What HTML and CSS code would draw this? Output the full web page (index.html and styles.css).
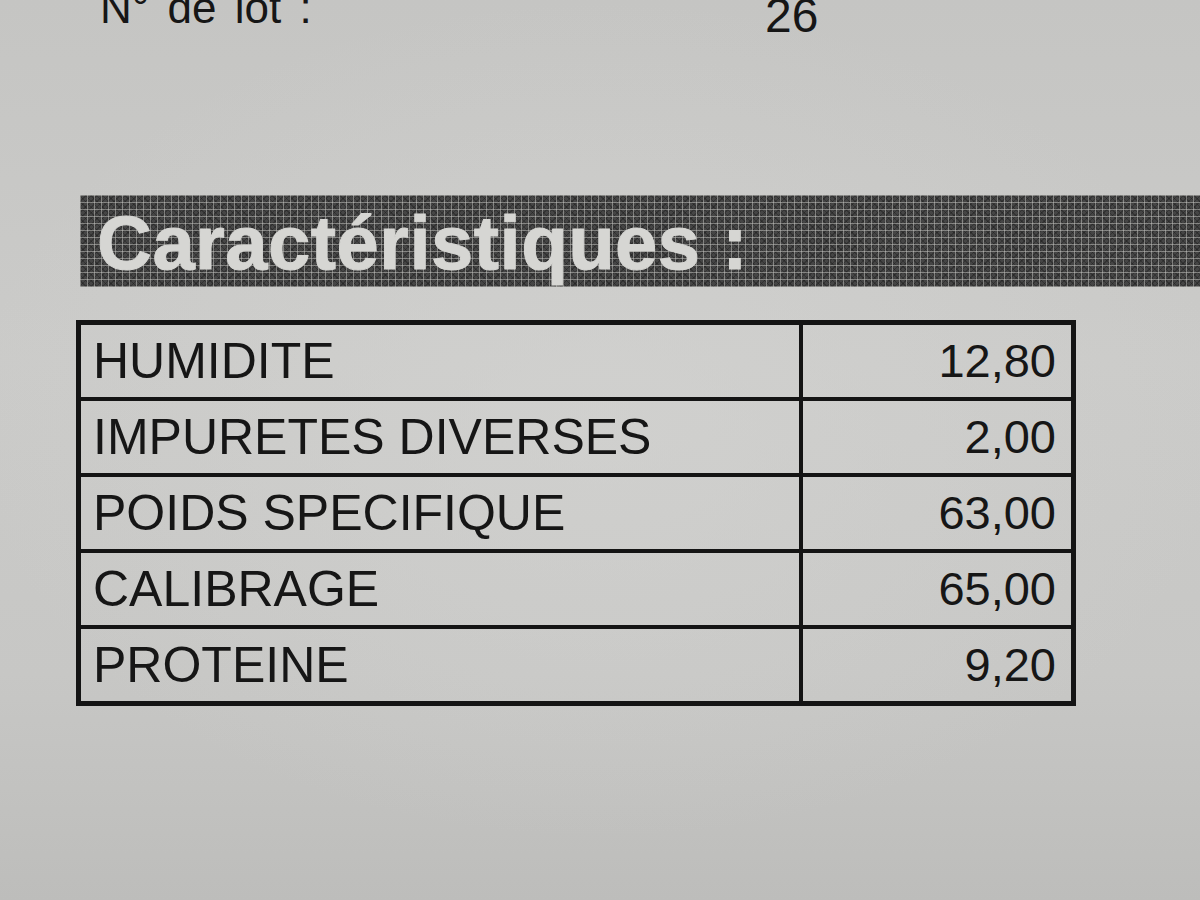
FILE: index.html
```html
<!DOCTYPE html>
<html lang="fr">
<head>
<meta charset="utf-8">
<title>Caractéristiques</title>
<link rel="stylesheet" href="styles.css">
</head>
<body>
<div class="sheet">
  <div class="lot">
    <span class="lot-label">N° de lot :</span>
    <span class="lot-value">26</span>
  </div>
  <div class="banner">
    <h2 class="banner-title">Caractéristiques :</h2>
  </div>
  <table class="specs">
    <tbody>
      <tr><td class="name">HUMIDITE</td><td class="val">12,80</td></tr>
      <tr><td class="name">IMPURETES DIVERSES</td><td class="val">2,00</td></tr>
      <tr><td class="name">POIDS SPECIFIQUE</td><td class="val">63,00</td></tr>
      <tr><td class="name">CALIBRAGE</td><td class="val">65,00</td></tr>
      <tr><td class="name">PROTEINE</td><td class="val">9,20</td></tr>
    </tbody>
  </table>
</div>
</body>
</html>
```
FILE: styles.css
```css
html, body {
  margin: 0;
  padding: 0;
  width: 1200px;
  height: 900px;
  overflow: hidden;
}
body {
  background-color: #c9c9c7;
  background-image:
    radial-gradient(ellipse 900px 600px at 600px 420px, rgba(212,212,210,0.6), rgba(212,212,210,0) 70%),
    linear-gradient(180deg, #c5c5c3 0%, #cbcbc9 40%, #c7c7c5 75%, #bdbdbb 100%);
  font-family: "Liberation Sans", Arial, sans-serif;
  color: #161616;
}
.sheet {
  display: flex;
  flex-direction: column;
}
.lot {
  display: flex;
  align-items: flex-start;
  height: 34px;
  line-height: 44px;
}
.lot-label {
  font-size: 44px;
  margin-top: -14px;
  margin-left: 100px;
  width: 665px;
  word-spacing: 6px;
}
.lot-value {
  font-size: 48px;
  margin-top: -6px;
}
.banner {
  margin-top: 161px;
  margin-left: 80px;
  height: 92px;
  background-color: #454545;
  background-image:
    linear-gradient(90deg, rgba(200,200,196,0.5) 1px, transparent 1px),
    linear-gradient(180deg, rgba(200,200,196,0.5) 1px, transparent 1px),
    repeating-linear-gradient(45deg, rgba(20,20,20,0.35) 0 1px, transparent 1px 4px),
    repeating-linear-gradient(-45deg, rgba(20,20,20,0.35) 0 1px, transparent 1px 4px);
  background-size: 7px 7px, 7px 7px, auto, auto;
  display: flex;
  align-items: center;
}
.banner-title {
  margin: 0 0 0 17px;
  font-size: 76px;
  font-weight: bold;
  letter-spacing: 0.5px;
  color: #d6d6d3;
  line-height: 1;
  padding-top: 4px;
  -webkit-text-stroke: 1px #d6d6d3;
  text-shadow: 0 0 1px rgba(120,120,120,0.6);
}
.specs {
  margin-top: 33px;
  margin-left: 76px;
  width: 1000px;
  border-collapse: collapse;
  border: 5px solid #141414;
}
.specs td {
  border: 4px solid #141414;
  height: 72px;
  padding: 0;
  vertical-align: middle;
  line-height: 72px;
}
.specs .name {
  width: 706px;
  font-size: 50px;
  padding-left: 12px;
}
.specs .val {
  font-size: 47px;
  text-align: right;
  padding-right: 15px;
}
```
